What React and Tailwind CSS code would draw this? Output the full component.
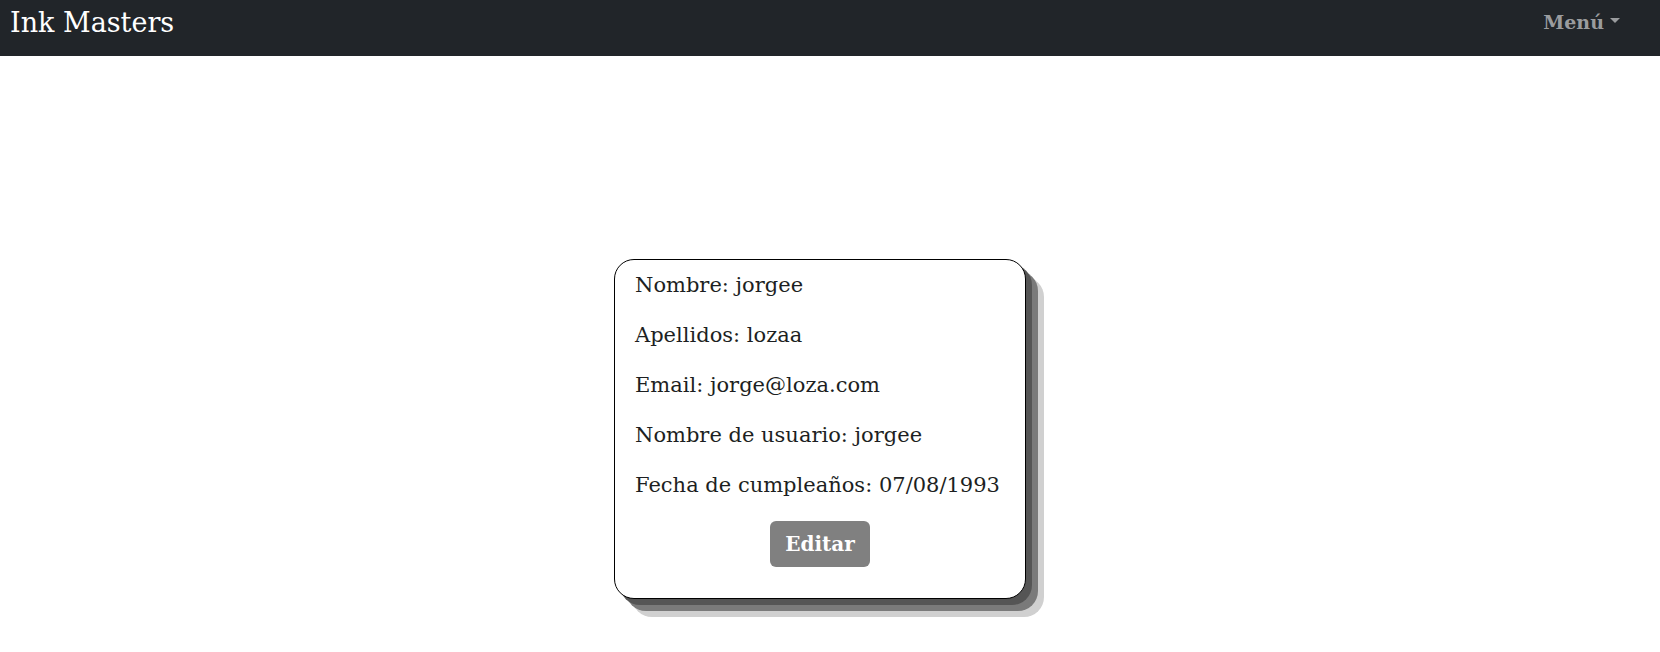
import React from 'react';

const serif = { fontFamily: '"DejaVu Serif", "Liberation Serif", serif' };

const fields = [
  ['Nombre', 'jorgee'],
  ['Apellidos', 'lozaa'],
  ['Email', 'jorge@loza.com'],
  ['Nombre de usuario', 'jorgee'],
  ['Fecha de cumpleaños', '07/08/1993'],
];

export default function App() {
  return (
    <div className="min-h-[652px] bg-white" style={serif}>
      <nav className="h-[56px] bg-[#212529] flex items-center justify-between pl-[10px] pr-[39px] pb-[12px]">
        <span className="text-[27px] text-white leading-none">Ink Masters</span>
        <button className="flex items-center gap-[6px] text-[19px] font-semibold text-[#9a9c9e] pr-[1px]">
          Menú
          <span className="inline-block w-0 h-0 border-l-[5px] border-r-[5px] border-t-[5px] border-l-transparent border-r-transparent border-t-[#9a9c9e] mb-[4px]" />
        </button>
      </nav>

      <div className="flex justify-center pr-[20px] mt-[203px]">
        <div className="w-[412px] bg-white border border-black rounded-[20px] pt-[8px] pb-[31px] px-[20px] text-[#1d1f22] shadow-[6px_6px_0_#555,12px_12px_0_#7a7a7a,18px_18px_0_#d0d0d0]">
          {fields.map(([label, value]) => (
            <p key={label} className="text-[21px] leading-[34px] mb-4 whitespace-nowrap">
              {label}: {value}
            </p>
          ))}
          <div className="flex justify-center pt-[3px]">
            <button className="w-[100px] h-[46px] bg-[#808080] rounded-[6px] text-white text-[20px] font-semibold">
              Editar
            </button>
          </div>
        </div>
      </div>
    </div>
  );
}
